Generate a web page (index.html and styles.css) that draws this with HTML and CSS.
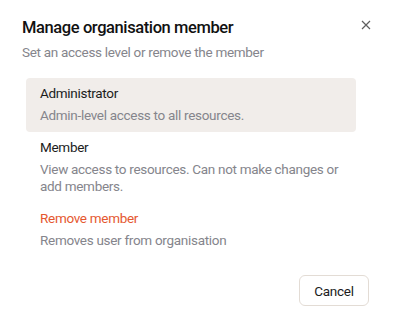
FILE: index.html
```html
<!DOCTYPE html>
<html lang="en">
<head>
    <meta charset="UTF-8">
    <meta name="viewport" content="width=device-width, initial-scale=1.0">
    <title>Manage organisation member</title>
    <link rel="stylesheet" href="styles.css">
</head>
<body>

    <div class="dialog">
        <div class="header">
            <div>
                <h2>Manage organisation member</h2>
                <p class="subtitle">Set an access level or remove the member</p>
            </div>
            <button class="close" aria-label="Close">
                <svg width="10" height="10" viewBox="0 0 10 10">
                    <path d="M1 1L9 9M9 1L1 9" stroke="#5f5f5f" stroke-width="1.2" fill="none"/>
                </svg>
            </button>
        </div>

        <div class="options">
            <div class="option selected">
                <div class="option-title">Administrator</div>
                <div class="option-desc">Admin-level access to all resources.</div>
            </div>
            <div class="option">
                <div class="option-title">Member</div>
                <div class="option-desc">View access to resources. Can not make changes or add members.</div>
            </div>
            <div class="option">
                <div class="option-title danger">Remove member</div>
                <div class="option-desc">Removes user from organisation</div>
            </div>
        </div>

        <div class="footer">
            <button class="btn">Cancel</button>
        </div>
    </div>

</body>
</html>
```

FILE: styles.css
```css
body {
    font-family: Roboto, "Noto Sans", sans-serif;
    background-color: #fff;
    margin: 0;
    color: #1c1c1c;
    letter-spacing: -0.3px;
}

.dialog {
    padding: 16px 30px 20px 22px;
}

.header {
    display: flex;
    justify-content: space-between;
    align-items: flex-start;
}

h2 {
    margin: 0;
    font-size: 16.5px;
    font-weight: 500;
    line-height: 24px;
    letter-spacing: -0.4px;
    color: #111;
}

.subtitle {
    margin: 2px 0 0 0;
    font-size: 13.5px;
    line-height: 20px;
    color: #85858c;
}

.close {
    background: none;
    border: none;
    padding: 0;
    margin: 2px -2px 0 0;
    width: 10px;
    height: 10px;
    cursor: pointer;
}

.options {
    margin: 16px 13px 0 4px;
    display: flex;
    flex-direction: column;
    gap: 1px;
}

.option {
    padding: 5px 14px 8px 14px;
    border-radius: 4px;
}

.option + .option {
    margin-top: -1px;
}

.option.selected {
    background-color: #f1edea;
}

.option-title {
    font-size: 13.5px;
    line-height: 20px;
}

.option-title.danger {
    color: #e5582f;
}

.option-desc {
    margin-top: 4px;
    font-size: 13.5px;
    line-height: 17px;
    color: #85858c;
}

.footer {
    display: flex;
    justify-content: flex-end;
    margin-top: 18px;
}

.btn {
    font-family: inherit;
    font-size: 13.5px;
    letter-spacing: -0.3px;
    color: #1c1c1c;
    background-color: #fff;
    border: 1px solid #e3dcd5;
    border-radius: 6px;
    padding: 0 14px;
    height: 31px;
    width: 70px;
    cursor: pointer;
}
```
